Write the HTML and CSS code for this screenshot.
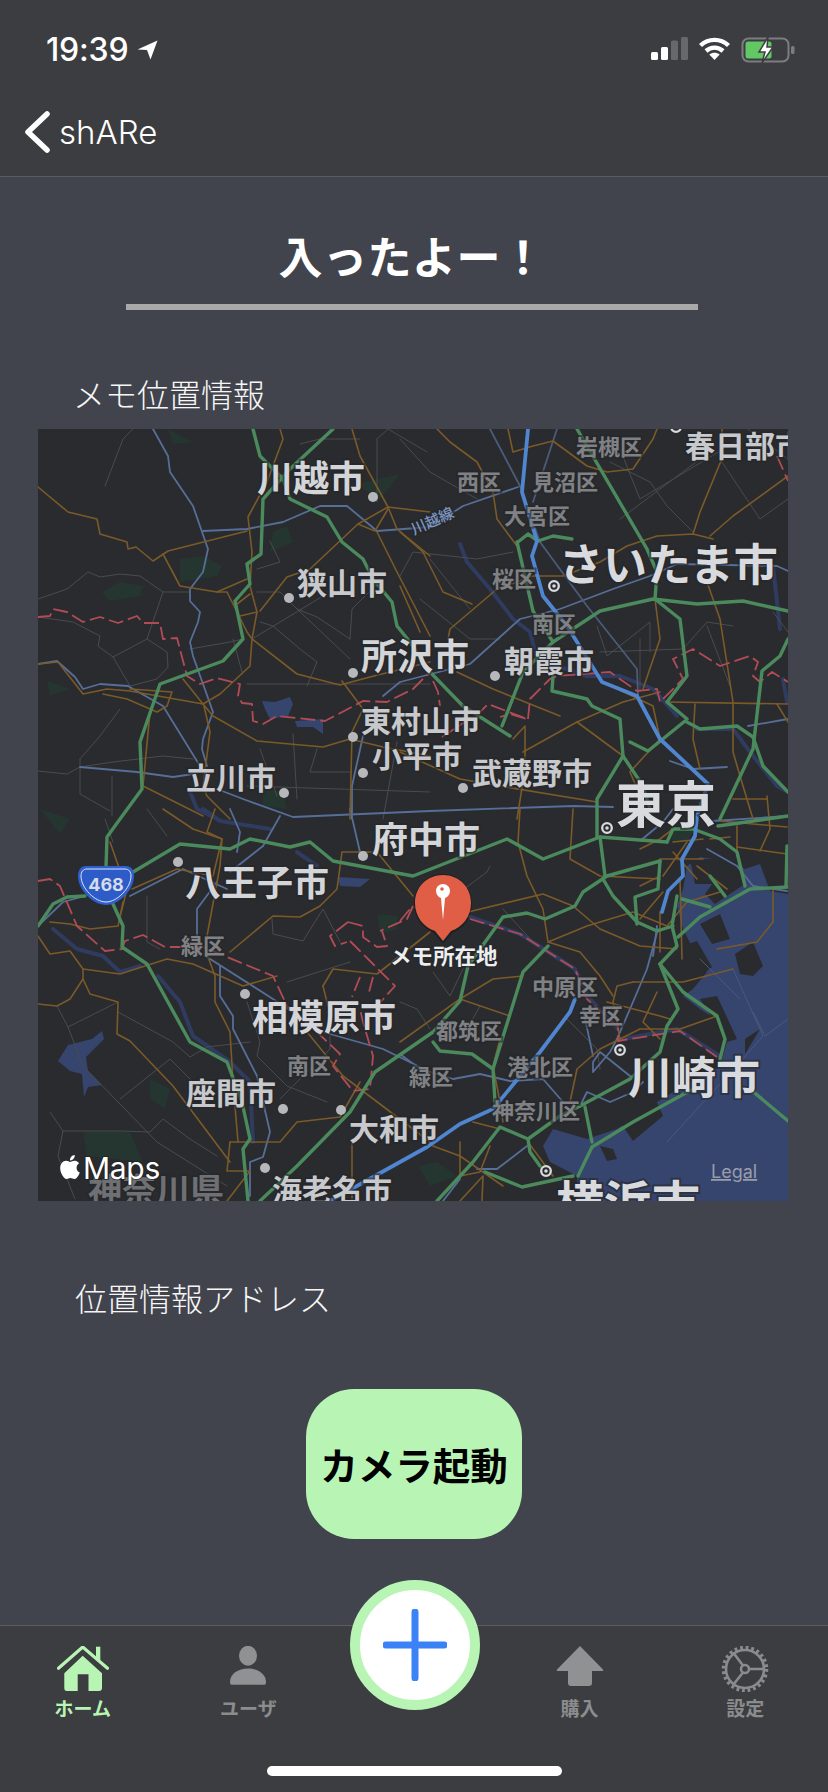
FILE: index.html
```html
<!DOCTYPE html>
<html lang="ja">
<head>
<meta charset="utf-8">
<title>shARe</title>
<link rel="stylesheet" href="styles.css">
</head>
<body>
<div class="app">
  <header class="header">
    <div class="status">
      <div class="status-left">
        <span class="time">19:39</span>
        <svg class="loc" viewBox="0 0 21 20"><path d="M0.5 9.5 20.5 0.5 13.5 19.5 10 10Z"/></svg>
      </div>
      <div class="status-right">
        <svg class="signal" viewBox="0 0 37 24"><rect class="on" x="0" y="15" width="7" height="8" rx="1.5"/><rect class="on" x="10" y="10" width="7" height="13" rx="1.5"/><rect class="off" x="20" y="3.500" width="7" height="19.500" rx="1.500"/><rect class="off" x="30" y="0" width="7" height="23" rx="1.500"/></svg>
        <svg class="wifi" viewBox="0 0 32 24"><path class="arc" d="M2 8.500C10 1 22 1 30 8.500"/><path class="arc" d="M7.500 14C12.500 9.500 19.500 9.500 24.500 14"/><path class="dotw" d="M16 23 10.800 17.500C14 15 18 15 21.200 17.500Z"/></svg>
        <svg class="battery" viewBox="0 0 54 26"><rect class="bat-out" x="1.500" y="1.500" width="46" height="23" rx="6"/><rect class="bat-in" x="4.500" y="4.500" width="26" height="17" rx="2.500"/><rect class="bat-nub" x="50" y="9" width="3.500" height="8" rx="1.500"/><path class="bolt" d="M27 0 18 15H24L21 26 32 10H26Z"/></svg>
      </div>
    </div>
    <div class="nav">
      <svg class="chev" viewBox="0 0 26 42"><path d="M23 3 4 21 23 39"/></svg>
      <span class="back">shARe</span>
    </div>
  </header>

  <main class="main">
    <h1 class="title">入ったよー！</h1>
    <p class="label label-first">メモ位置情報</p>
    <div class="map">
      <svg class="map-svg" viewBox="38 430 750 772" role="img">
        <g class="park">
          <path d="M168 430 193 443 173 445Z"/><path d="M180 560 203 557 222 567 217 577 200 580 180 583Z"/><path d="M102 593 120 583 143 587 140 597 110 602Z"/><path d="M273 533 287 527 293 543 270 553Z"/><path d="M47 682 70 690 50 697Z"/><path d="M263 790 283 793 287 810 263 807Z"/><path d="M83 1133 130 1133 143 1163 87 1157Z"/><path d="M418 1167 437 1163 457 1177 430 1187Z"/><path d="M670 828 695 830 687 843 673 843Z"/><path d="M377 915 397 917 398 930 380 935Z"/><path d="M355 485 400 475 380 500Z"/><path d="M40 810 70 820 60 835Z"/><path d="M150 1080 170 1090 165 1110 150 1100Z"/>
        </g>
        <g class="river">
          <polyline points="53,930 77,950 103,957 120,973 140,967"/>
          <polyline points="158,977 180,1003 193,1037 230,1063 250,1083 253,1143"/>
          <polyline points="297,853 317,867"/>
          <polyline points="190,793 197,810 213,818"/>
          <polyline points="203,810 220,822 270,830"/>
          <polyline points="460,545 467,563 490,590 513,620 530,633 537,660 587,677 620,677 653,690 677,717"/>
          <polyline points="697,730 733,730 750,753 777,787 788,793"/>
          <polyline points="773,567 780,630"/>
          <polyline points="783,680 787,703"/>
          <polyline points="470,918 520,935 575,970 590,1000 618,1030"/>
          <polyline points="623,1040 677,1030 720,1057"/>
        </g>
        <g class="water">
          <path d="M58 1062 68 1046 92 1040 102 1032 104 1040 86 1058 88 1072 102 1086 88 1088 84 1098 82 1075 70 1072Z"/>
          <path d="M338 878 370 880 360 888 340 887Z"/>
          <path d="M262 702 275 703 290 698 293 705 288 717 270 720 265 710Z"/>
          <path d="M295 722 323 720 323 735 313 728 297 728Z"/>
          <path d="M687 867 683 890 677 907 683 930 693 950 707 973 693 990 683 997 700 1010 720 1023 727 1043 720 1067 683 1087 657 1103 617 1130 587 1140 553 1130 543 1147 550 1163 577 1177 578 1202 788 1202 788 895 770 892 760 865 745 870 733 863 700 858Z"/>
        </g>
        <g class="land">
          <path d="M690 860 735 860 745 885 715 905 705 895 712 885 695 885Z"/>
          <path d="M735 955 753 943 763 967 753 977 740 975Z"/>
          <path d="M700 1000 717 997 737 1040 727 1043Z"/>
          <path d="M620 1123 657 1103 663 1117 633 1142Z"/>
          <path d="M600 1147 613 1150 617 1160 607 1162Z"/>
          <path d="M600 1107 620 1097 630 1112 610 1120Z"/>
          <path d="M700 925 720 915 730 940 712 945Z"/>
          <path d="M745 1040 760 1030 745 1055Z"/>
          <path d="M640 1080 650 1075 660 1090 645 1092Z"/>
          <path d="M688 945 697 942 712 968 703 975Z"/>
        </g>
        <g class="seaway">
          <polyline points="733,970 763,1037 740,1063 667,1143"/>
          <polyline points="753,1013 765,1037 788,1020"/>
          <polyline points="700,960 740,1000"/>
        </g>
        <g class="road">
          <polyline points="105,487 123,440 133,430"/>
          <polyline points="38,600 67,590 88,573 100,578 120,575 140,577 163,593 190,593"/>
          <polyline points="38,618 73,623 100,637 98,647 113,658 147,640 163,593"/>
          <polyline points="113,658 130,687"/>
          <polyline points="147,640 167,653 168,668 157,680 130,687"/>
          <polyline points="190,650 230,643 243,640"/>
          <polyline points="233,640 242,673"/>
          <polyline points="247,685 430,685"/>
          <polyline points="252,640 323,597"/>
          <polyline points="260,623 273,627 300,650 317,663 307,687"/>
          <polyline points="297,610 317,618 350,640"/>
          <polyline points="257,593 280,593 297,610 350,660"/>
          <polyline points="270,542 280,563 257,570"/>
          <polyline points="377,440 388,430 427,453"/>
          <polyline points="377,440 377,503"/>
          <polyline points="350,640 352,610 377,585"/>
          <polyline points="38,772 67,775 80,768 113,763 163,757 193,760"/>
          <polyline points="80,760 80,795 110,812"/>
          <polyline points="112,777 112,817"/>
          <polyline points="120,710 100,737 80,760"/>
          <polyline points="260,750 277,797"/>
          <polyline points="293,735 297,800"/>
          <polyline points="317,750 310,773 350,773"/>
          <polyline points="247,787 430,793"/>
          <polyline points="397,743 383,820"/>
          <polyline points="400,440 430,473 477,500"/>
          <polyline points="610,463 650,483 667,507 693,533"/>
          <polyline points="400,577 413,553 477,560 513,553"/>
          <polyline points="597,627 607,657 650,623 650,653"/>
          <polyline points="600,653 683,650"/>
          <polyline points="683,650 707,623 733,627"/>
          <polyline points="707,627 730,687"/>
          <polyline points="773,613 788,633"/>
          <polyline points="68,1028 57,1007"/>
          <polyline points="68,1028 118,1003"/>
          <polyline points="68,1028 83,1067 157,1143 227,1187"/>
          <polyline points="118,1013 173,1043 190,1058 207,1048 250,1043"/>
          <polyline points="50,1113 63,1132 58,1157 75,1200"/>
          <polyline points="63,1132 120,1132 150,1133 163,1120 190,1140 217,1157"/>
          <polyline points="147,897 147,943 160,950"/>
          <polyline points="272,920 273,935 303,942 323,910 340,943"/>
          <polyline points="247,1003 260,1043 257,1057 287,1087 327,1103"/>
          <polyline points="287,983 350,963"/>
          <polyline points="105,820 113,843"/>
          <polyline points="147,810 167,837"/>
          <polyline points="433,973 450,997 463,970"/>
          <polyline points="480,1007 467,1030"/>
          <polyline points="400,1003 417,1010 430,1030"/>
          <polyline points="490,867 487,873 460,893 443,898"/>
          <polyline points="503,910 533,943"/>
          <polyline points="567,1020 597,1050 600,1070"/>
          <polyline points="620,450 640,500 690,470 740,440"/>
          <polyline points="720,460 760,520 788,500"/>
          <polyline points="748,430 788,460"/>
          <polyline points="640,640 640,690"/>
          <polyline points="420,600 470,640 500,640"/>
          <polyline points="430,560 470,610"/>
          <polyline points="360,440 320,440 300,445"/>
          <polyline points="700,460 620,520"/>
          <polyline points="280,1100 330,1050 330,1010"/>
          <polyline points="120,1100 170,1060 210,1100"/>
        </g>
        <g class="rail">
          <polyline points="153,430 168,457 170,473 193,507 208,550 203,573 190,590 190,602 200,613 198,623 190,643 193,657 213,713 203,740 202,750 207,767"/>
          <polyline points="203,532 247,530 283,523 320,507 347,507 377,532 430,528 463,507 518,488"/>
          <polyline points="38,665 57,662 75,678 83,690 100,685 128,687 163,707 200,767"/>
          <polyline points="80,768 137,773 173,778 193,775"/>
          <polyline points="217,790 243,800 293,818 430,812 573,807 613,808"/>
          <polyline points="383,697 400,683 470,665 520,620 560,610 613,590 650,577 677,565 777,567 788,572"/>
          <polyline points="363,737 352,787 352,820 350,810 360,853"/>
          <polyline class="dim" points="490,430 520,487 540,543 587,607 637,670 638,697"/>
          <polyline class="dim" points="557,430 533,503"/>
          <polyline points="38,927 63,903 85,897"/>
          <polyline points="130,897 183,870 227,890"/>
          <polyline points="197,937 197,910 217,883"/>
          <polyline points="207,958 273,1000 323,1033 383,1050 430,1073"/>
          <polyline points="220,967 220,997 233,1017 233,1030 257,1077 270,1133 263,1158 250,1163 250,1197"/>
          <polyline points="230,810 240,833 237,853"/>
          <polyline points="280,817 263,847 230,873"/>
          <polyline points="400,1055 420,1070 453,1080 480,1075 510,1082 543,1080 563,1103"/>
          <polyline points="658,930 647,970 630,1010 617,1040 610,1053 593,1073 593,1063 600,1053 630,1077"/>
          <polyline points="583,1010 593,1057"/>
          <polyline points="580,1107 587,1093 610,1103 633,1093 643,1083"/>
          <polyline points="477,1170 497,1170 527,1147"/>
          <polyline points="443,1202 460,1180"/>
          <polyline points="640,842 663,823 673,810"/>
          <polyline points="707,850 737,867 753,887 787,892"/>
          <polyline points="713,822 787,817"/>
          <polyline points="657,927 653,957"/>
          <polyline points="748,727 788,720"/>
          <polyline points="670,762 693,770 727,768"/>
        </g>
        <g class="major">
          <polyline points="38,488 68,513 97,520 100,535 127,543 128,550 136,548 153,562 168,552 247,532"/>
          <polyline points="163,555 180,587 217,593 227,593 247,633 252,640 297,675 340,686 370,678 430,663"/>
          <polyline points="280,430 283,440 267,483 248,518 252,553 250,587 257,613 252,640 250,667 220,695 203,705 183,680"/>
          <polyline points="217,593 247,580"/>
          <polyline points="237,605 250,595"/>
          <polyline points="240,617 257,613"/>
          <polyline points="260,612 287,578 310,570 358,525 388,508 430,513"/>
          <polyline points="352,430 360,457 388,508 397,530 430,557"/>
          <polyline points="358,525 375,532 388,510"/>
          <polyline points="377,533 397,573 430,637"/>
          <polyline points="38,665 58,663 83,695 107,690 130,692 203,705 213,717 257,742 323,748 350,740 383,748 430,757"/>
          <polyline points="103,695 127,700 157,713 167,707 172,693 130,690"/>
          <polyline points="150,713 143,787 203,817"/>
          <polyline points="204,707 210,733 203,787 207,797 230,820"/>
          <polyline points="342,682 363,710 352,733 350,820"/>
          <polyline points="437,430 450,443 477,463 493,493 497,520 517,547"/>
          <polyline points="508,430 513,453 533,447 553,442 587,467 607,473 633,470 653,440 657,430"/>
          <polyline points="400,533 423,553 443,593 472,605"/>
          <polyline points="400,587 420,633"/>
          <polyline points="448,640 450,630 497,590 533,577 563,577 600,563 627,547 657,537 693,535 713,540"/>
          <polyline points="693,535 700,513 723,457 722,430"/>
          <polyline points="710,537 733,517 788,477"/>
          <polyline points="655,600 660,640 643,690"/>
          <polyline points="707,583 720,620 733,703 733,753 743,787 753,820"/>
          <polyline points="667,703 788,705"/>
          <polyline points="695,705 693,740 700,770"/>
          <polyline points="777,705 788,723"/>
          <polyline points="457,673 493,690 560,717"/>
          <polyline points="523,753 577,723 623,703 660,693"/>
          <polyline points="577,723 623,757"/>
          <polyline points="513,740 525,727 525,770 517,820"/>
          <polyline points="400,753 460,780 500,787 597,803"/>
          <polyline points="603,683 653,707 660,740 630,773 650,820"/>
          <polyline points="38,937 50,955 70,952 83,970 120,975 167,960 193,965 243,987 277,977"/>
          <polyline points="83,970 83,980 70,1000 57,1007 38,1005"/>
          <polyline points="83,980 90,995 118,1003 117,1035 130,1042 173,1087 230,1163"/>
          <polyline points="110,843 117,863 127,890 120,918"/>
          <polyline points="50,923 70,925 90,930 118,927 123,903"/>
          <polyline points="132,890 177,870 213,877 222,840 193,830 163,810"/>
          <polyline points="215,810 207,833 222,840 220,867 207,937 207,955 215,977 215,1003 230,1033 233,1083 238,1143"/>
          <polyline points="230,953 273,917 300,918 320,907 337,890 342,853 377,853 413,897"/>
          <polyline points="230,1143 280,1143 297,1123 340,1118 360,1083"/>
          <polyline points="230,1143 227,1172 250,1172 227,1202"/>
          <polyline points="307,1033 343,1077 430,1143"/>
          <polyline points="323,987 333,970 377,975 430,933"/>
          <polyline points="323,987 328,1007"/>
          <polyline points="352,1143 352,1202"/>
          <polyline points="520,810 518,843 527,877 543,910 548,943 580,953 600,977 613,997"/>
          <polyline points="468,913 543,895 573,907 600,930 640,947 677,950"/>
          <polyline points="548,943 587,927 633,913 667,927 687,903 720,893"/>
          <polyline points="573,810 570,860 600,877 660,880"/>
          <polyline points="460,1000 493,980 523,977"/>
          <polyline points="400,1043 460,1000 510,1017"/>
          <polyline points="500,1040 493,1067 500,1103 503,1123"/>
          <polyline points="570,1103 577,1070 600,1050 640,1030 680,1030 717,1017"/>
          <polyline points="633,983 617,987 613,1003 620,1040"/>
          <polyline points="607,1003 660,1017 670,1020"/>
          <polyline points="633,983 683,983 733,970"/>
          <polyline points="657,993 643,1023 660,1040"/>
          <polyline points="673,843 703,840"/>
          <polyline points="663,877 687,843"/>
          <polyline points="673,853 697,880"/>
          <polyline points="660,860 703,860"/>
          <polyline points="710,840 730,838"/>
          <polyline points="737,827 737,857"/>
          <polyline points="720,822 787,828"/>
          <polyline points="737,848 787,855"/>
          <polyline points="767,797 770,830 760,852"/>
          <polyline points="733,800 767,800"/>
          <polyline points="640,850 660,840 673,830"/>
          <polyline points="640,887 660,877"/>
          <polyline points="640,920 663,893"/>
          <polyline points="660,913 660,953"/>
          <polyline points="697,867 727,890"/>
          <polyline points="773,890 773,923 757,943 717,950"/>
          <polyline points="680,880 682,960"/>
          <polyline points="460,1143 460,1177 480,1173 490,1147"/>
          <polyline points="473,1123 500,1130"/>
          <polyline points="433,1147 460,1157 503,1187"/>
          <polyline points="528,1143 553,1177"/>
          <polyline points="460,1202 483,1177 482,1202"/>
        </g>
        <g class="border">
          <polyline points="38,618 50,617 53,610 67,613 83,623 100,618 118,624 137,617 143,624 160,624 163,640 177,639 187,677 200,685 217,679 240,685 238,697 242,704 252,705 253,722 263,725 277,717 325,722 363,702 387,703 413,690 430,673"/>
          <polyline points="433,682 438,693 440,707"/>
          <polyline points="442,738 480,713 488,705 527,720 510,715 500,718"/>
          <polyline points="528,720 530,700 550,680 557,677 610,673 637,692 657,690 660,703 683,680 673,660 693,650 720,667 750,657 758,663 753,677 760,683 772,673 788,683"/>
          <polyline points="777,457 788,482"/>
          <polyline points="38,882 50,880 60,887 77,927 105,952 122,950 125,942 143,936 165,948 203,948 273,977 287,1007 317,1033 340,1055 333,1067 353,1092 370,1090 373,1057 363,1023 360,1010"/>
          <polyline points="413,907 407,920 380,932"/>
          <polyline points="348,923 330,937 335,947 347,943"/>
          <polyline points="348,923 363,927 363,938 377,948 387,947 382,932"/>
          <polyline points="350,942 395,987 377,1007"/>
          <polyline points="373,978 368,997"/>
          <polyline points="360,978 352,998"/>
          <polyline points="400,922 410,910"/>
          <polyline points="470,920 520,935 575,970 587,1000 618,1028 618,1042 680,1032 717,1058"/>
        </g>
        <g class="motorway">
          <polyline points="253,430 260,457 283,480 290,500 327,518 342,543 363,560 373,580 392,603 397,627 410,643 430,673 463,707 510,737"/>
          <polyline points="333,430 290,470 263,500 261,555 247,565 250,585 235,602 243,640 223,662 160,685 140,743 142,790 120,820 107,838 106,868"/>
          <polyline points="85,897 67,898 53,905 38,927"/>
          <polyline points="113,905 123,927 122,948 147,965 190,1043 227,1063 242,1103 250,1140 243,1150 248,1202"/>
          <polyline points="133,873 180,845 230,850 250,840 290,848 310,843 333,862 413,877 507,840 543,860 600,838 667,843"/>
          <polyline points="260,1202 297,1167 350,1113 375,1073 433,1033 460,1002 468,967 503,918 527,914 545,920 575,907 583,893 607,877 660,862"/>
          <polyline points="433,1043 440,1052 472,1055 493,1070 495,1103"/>
          <polyline points="493,1070 523,973 548,947"/>
          <polyline points="603,880 613,897 637,923 657,932 673,927"/>
          <polyline points="600,838 605,877"/>
          <polyline points="660,965 678,1010 667,1027 660,1053 630,1080 580,1107"/>
          <polyline points="677,897 672,927 677,947 660,965"/>
          <polyline points="660,965 683,993 717,1017 725,1040 720,1060"/>
          <polyline points="678,938 700,918 750,890 788,888"/>
          <polyline points="592,1148 633,1123 693,1090"/>
          <polyline points="750,1090 788,1122"/>
          <polyline points="592,1148 578,1177"/>
          <polyline points="485,1173 522,1188 573,1177"/>
          <polyline points="437,1202 473,1163 500,1128 528,1140 530,1153 540,1167"/>
          <polyline points="528,1140 560,1117 580,1107"/>
          <polyline points="585,1108 592,1143"/>
          <polyline points="667,843 673,830 693,830 720,840 737,853 745,887"/>
          <polyline points="718,827 788,817"/>
          <polyline points="710,877 725,897"/>
          <polyline points="682,900 710,908"/>
          <polyline points="660,862 658,890 635,898 637,925"/>
          <polyline points="787,847 786,888"/>
          <polyline points="577,430 647,550 657,573 655,600 680,620 687,677 667,703 687,720"/>
          <polyline points="517,543 533,612 553,643 523,673 502,727"/>
          <polyline points="518,543 528,535 538,542 553,537 572,540"/>
          <polyline points="553,643 600,612 653,600 697,605 743,602 788,612"/>
          <polyline points="553,677 552,692 587,700 592,707 620,720 623,757 597,800 597,838"/>
          <polyline points="623,757 643,787 650,810"/>
          <polyline points="630,743 648,752 685,722 700,730 737,727 753,738 763,767 788,793"/>
          <polyline points="788,640 780,657 762,672 753,750 720,820"/>
        </g>
        <g class="expressway">
          <polyline points="528,430 522,493 537,542 532,557 543,597 567,627 602,683 637,697 660,740 708,785 697,817 695,837 682,860 683,877 668,892 662,913"/>
          <polyline points="575,1000 570,1013 540,1053 493,1110 460,1125 427,1148 400,1163 330,1202"/>
        </g>
        <g class="dot">
          <circle cx="373" cy="498" r="5"/><circle cx="289" cy="599" r="5"/><circle cx="353" cy="674" r="5"/><circle cx="353" cy="738" r="5"/><circle cx="363" cy="774" r="5"/><circle cx="284" cy="794" r="5"/><circle cx="495" cy="677" r="5"/><circle cx="463" cy="789" r="5"/><circle cx="178" cy="863" r="5"/><circle cx="363" cy="857" r="5"/><circle cx="245" cy="995" r="5"/><circle cx="283" cy="1110" r="5"/><circle cx="341" cy="1111" r="5"/><circle cx="265" cy="1169" r="5"/>
        </g>
        <g class="ring">
          <circle cx="554" cy="587" r="4.800"/><circle cx="607" cy="829" r="4.800"/><circle cx="620" cy="1051" r="4.800"/><circle cx="546" cy="1172" r="4.800"/><circle cx="676" cy="428" r="4.800"/>
        </g>
        <g class="ring-c">
          <circle cx="554" cy="587" r="1.800"/><circle cx="607" cy="829" r="1.800"/><circle cx="620" cy="1051" r="1.800"/><circle cx="546" cy="1172" r="1.800"/>
        </g>
        <g class="lb lb35">
          <text x="257" y="493">川越市</text><text x="361" y="671">所沢市</text><text x="372" y="854">府中市</text><text x="185" y="897">八王子市</text><text x="252" y="1032">相模原市</text>
        </g>
        <g class="lb lb29">
          <text x="297" y="595">狭山市</text><text x="504" y="673">朝霞市</text><text x="361" y="733">東村山市</text><text x="372" y="768">小平市</text><text x="472" y="785">武蔵野市</text><text x="186" y="790">立川市</text><text x="186" y="1105">座間市</text><text x="349" y="1141">大和市</text><text x="272" y="1202">海老名市</text><text x="685" y="458">春日部市</text>
        </g>
        <g class="lb lb42">
          <text x="559" y="582">さいたま市</text><text x="628" y="1095">川崎市</text>
        </g>
        <text class="lb lb46" x="616" y="824">東京</text>
        <text class="lb lb48" x="556" y="1222">横浜市</text>
        <g class="lb lb21">
          <text x="576" y="456">岩槻区</text><text x="457" y="491">西区</text><text x="532" y="491">見沼区</text><text x="504" y="525">大宮区</text><text x="492" y="588">桜区</text><text x="532" y="633">南区</text><text x="181" y="955">緑区</text><text x="287" y="1075">南区</text><text x="532" y="996">中原区</text><text x="579" y="1025">幸区</text><text x="436" y="1040">都筑区</text><text x="409" y="1086">緑区</text><text x="507" y="1076">港北区</text><text x="492" y="1120">神奈川区</text>
        </g>
        <text class="lb lb-ken" x="88" y="1204">神奈川県</text>
        <text class="lb lb-line" transform="translate(414 536) rotate(-24)">川越線</text>
        <g class="shield">
          <path class="sh-out" d="M86 867H126C131 867 134 871 134 877 134 891 119 906 106 906 93 906 78 891 78 877 78 871 81 867 86 867Z"/>
          <path class="sh-in" d="M87 870H125C129 870 131 873 131 877 131 889 117 903 106 903 95 903 81 889 81 877 81 873 83 870 87 870Z"/>
          <text class="sh-txt" x="106" y="892">468</text>
        </g>
        <g class="pin">
          <path class="pin-shadow" d="M443 945 434 934C421 929 414 917 414 905 414 888 427 875 443 875 459 875 472 888 472 905 472 917 465 929 452 934Z"/>
          <path class="pin-body" d="M443 942 435 932C423 928 415 917 415 904 415 888 427 876 443 876 459 876 471 888 471 904 471 917 463 928 451 932Z"/>
          <path class="pin-mark" d="M441 899C438 898 436 895 436 892 436 888 439 885 443 885 447 885 450 888 450 892 450 895 448 898 445 899L443 921Z"/>
          <circle class="pin-hole" cx="442" cy="890" r="1.800"/>
        </g>
        <text class="lb-pin" x="390" y="965">メモ所在地</text>
        <svg class="apple" x="58" y="1155" width="24" height="26" viewBox="0 0 24 24"><path d="M12.152 6.896c-.948 0-2.415-1.078-3.96-1.04-2.04.027-3.91 1.183-4.961 3.014-2.117 3.675-.546 9.103 1.519 12.09 1.013 1.454 2.208 3.09 3.792 3.039 1.52-.065 2.09-.987 3.935-.987 1.831 0 2.35.987 3.96.948 1.637-.026 2.676-1.48 3.676-2.948 1.156-1.688 1.636-3.325 1.662-3.415-.039-.013-3.182-1.221-3.22-4.857-.026-3.04 2.48-4.494 2.597-4.559-1.429-2.09-3.623-2.324-4.39-2.376-2-.156-3.675 1.09-4.61 1.09zM15.53 3.83c.843-1.012 1.4-2.427 1.245-3.83-1.207.052-2.662.805-3.532 1.818-.78.896-1.454 2.338-1.273 3.714 1.338.104 2.715-.688 3.559-1.701"/></svg>
        <text class="maps" x="83" y="1180">Maps</text>
        <text class="legal" x="711" y="1179">Legal</text>
      </svg>
    </div>
    <p class="label label-second">位置情報アドレス</p>
    <button class="camera" type="button">カメラ起動</button>
  </main>

  <nav class="tabbar">
    <div class="tab tab-active">
      <svg class="ticon" width="52" height="46" viewBox="0 0 52 46"><path class="home-roof" d="M1.500 22.300 25.700 1 50.500 22.300"/><rect class="home-fill" x="39" y="0.700" width="4.300" height="13.500"/><path class="home-fill home-body" d="M7.300 27.300 25.700 9.800 45 27.300V42C45 44 44 45 42 45H31.500V28.300H20.700V45H10C8 45 7.300 44 7.300 42Z"/></svg>
      <span class="tab-label">ホーム</span>
    </div>
    <div class="tab">
      <svg class="ticon" width="36" height="46" viewBox="0 0 36 46"><ellipse class="gray" cx="18" cy="9.800" rx="9" ry="10"/><path class="gray" d="M1.500 38.800Q0 38.800 0 36C0 28 8 22.500 18 22.500 28 22.500 36 28 36 36 36 38.800 34.500 38.800 34.500 38.800Z"/></svg>
      <span class="tab-label">ユーザ</span>
    </div>
    <div class="tab tab-spacer"></div>
    <div class="tab">
      <svg class="ticon" width="48" height="46" viewBox="0 0 48 46"><path class="gray" d="M24 0 47 23.500C47.500 24.500 47 25 46 25H36V37C36 39 35 40 33 40H15C13 40 12 39 12 37V25H2C1 25 .5 24.500 1 23.500Z"/></svg>
      <span class="tab-label">購入</span>
    </div>
    <div class="tab">
      <svg class="ticon" width="50" height="46" viewBox="0 0 48 46"><circle class="gear-teeth" cx="24" cy="23" r="21.500"/><circle class="gear-line" cx="24" cy="23" r="19"/><circle class="gear-line" cx="24" cy="23" r="4"/><path class="gear-line" d="M28 23H43M22 19.500 12.500 7M22 26.500 12 39"/></svg>
      <span class="tab-label">設定</span>
    </div>
    <button class="fab" type="button" aria-label="追加">
      <svg width="64" height="72" viewBox="0 0 64 72"><path class="plus" d="M32 3V69M3 36H61"/></svg>
    </button>
    <div class="home-ind"></div>
  </nav>
</div>
</body>
</html>
```
FILE: styles.css
```css
* { box-sizing: border-box; }
html, body { margin: 0; padding: 0; background: #41444d; }
body { font-family: "Noto Sans CJK JP", "Noto Sans", sans-serif; color: #fff; }
.app { width: 828px; height: 1792px; display: flex; flex-direction: column; overflow: hidden; }

.header { height: 177px; background: #3c3d40; border-bottom: 1px solid #5b5c60; flex: none; }
.status { height: 88px; display: flex; justify-content: space-between; padding: 0 33px 0 46px; }
.status-left { display: flex; align-items: flex-start; padding-top: 31px; gap: 9px; }
.time { font-family: Inter, sans-serif; font-weight: 500; font-size: 32px; line-height: 38px; letter-spacing: -0.2px; }
.loc { width: 21px; height: 20px; margin-top: 9px; fill: #fff; }
.status-right { display: flex; align-items: flex-start; padding-top: 37px; gap: 10px; }
.signal { width: 37px; height: 24px; }
.on { fill: #fff; }
.off { fill: #676869; }
.wifi { width: 33px; height: 24px; }
.arc { fill: none; stroke: #fff; stroke-width: 4.400; }
.dotw { fill: #fff; }
.battery { width: 54px; height: 26px; }
.bat-out { fill: none; stroke: #7c7d80; stroke-width: 2; }
.bat-in { fill: #62c866; }
.bat-nub { fill: #7c7d80; }
.bolt { fill: #fff; stroke: #3c3d40; stroke-width: 1.5; }

.nav { height: 88px; display: flex; align-items: flex-start; padding: 23px 0 0 24px; gap: 9px; }
.chev { width: 26px; height: 42px; fill: none; stroke: #fff; stroke-width: 5.5; stroke-linecap: round; stroke-linejoin: round; }
.back { font-family: Inter, sans-serif; font-weight: 300; font-size: 33px; line-height: 38px; margin-top: 2px; }

.main { flex: 1; display: flex; flex-direction: column; align-items: flex-start; min-height: 0; }
.title { margin: 53px 0 0 126px; width: 572px; height: 80px; border-bottom: 6px solid #a9a9a9; text-align: center; font-size: 44px; line-height: 50px; font-weight: 700; letter-spacing: .5px; }
.label { margin: 0; font-size: 32px; line-height: 34px; font-weight: 300; color: #f6f6f6; }
.label-first { margin: 66px 0 0 73px; }
.label-second { margin: 79px 0 0 75px; }
.map { margin: 19px 0 0 38px; width: 750px; height: 772px; background: #2a2b2e; overflow: hidden; flex: none; }
.map-svg { display: block; width: 750px; height: 772px; }
.map-svg polyline { fill: none; stroke-linejoin: round; stroke-linecap: round; }

.park { fill: #253530; }
.river polyline { stroke: #2f3c60; stroke-width: 4; }
.water { fill: #36456e; }
.land { fill: #2a2b2e; }
.seaway polyline { stroke: #4a587f; stroke-width: 1; }
.road polyline { stroke: #4a4b4e; stroke-width: 1; }
.rail polyline { stroke: #566e98; stroke-width: 1.800; }
.rail polyline.dim { stroke: #4b5b79; }
.major polyline { stroke: #7b5a28; stroke-width: 1.600; }
.border polyline { stroke: #b14c57; stroke-width: 1.8; stroke-dasharray: 15 5; stroke-linecap: butt; }
.motorway polyline { stroke: #4b8a5c; stroke-width: 3.400; }
.expressway polyline { stroke: #5085d0; stroke-width: 3.800; }
.dot { fill: #b7b8bc; }
.ring { fill: #2a2b2e; stroke: #d9dbde; stroke-width: 2.300; }
.ring-c { fill: #d9dbde; }

.lb { font-family: "Noto Sans CJK JP", sans-serif; font-weight: 700; fill: #d3d5d8; stroke: rgba(38,39,42,.6); stroke-width: 4px; paint-order: stroke; }
.lb35 { font-size: 36px; }
.lb29 { font-size: 30px; fill: #c7c9cc; }
.lb42 { font-size: 44px; fill: #d8dadd; }
.lb46 { font-size: 50px; fill: #d8dadd; }
.lb48 { font-size: 48px; fill: #d8dadd; }
.lb21 { font-size: 22px; fill: #7f8184; font-weight: 700; }
.lb-ken { font-size: 34px; fill: #6e7073; }
.lb-line { font-size: 15px; font-weight: 500; fill: #7c96c0; }
.lb-pin { font-family: "Noto Sans CJK JP", sans-serif; font-weight: 700; font-size: 21.500px; fill: #eceef0; stroke: rgba(38,39,42,.7); stroke-width: 3px; paint-order: stroke; }

.sh-out { fill: #2d5fd0; }
.sh-in { fill: #2d5cc8; stroke: #dfe5f2; stroke-width: 1; }
.sh-txt { font-family: Inter, "Liberation Sans", sans-serif; font-weight: 700; font-size: 18px; fill: #d6dbe6; text-anchor: middle; }

.pin-shadow { fill: rgba(0,0,0,.25); }
.pin-body { fill: #e05e46; }
.pin-mark { fill: #fff; }
.pin-hole { fill: #e05e46; }

.apple { fill: #fff; }
.maps { font-family: Inter, sans-serif; font-size: 30px; font-weight: 400; fill: #fff; stroke: rgba(30,30,32,.6); stroke-width: 2px; paint-order: stroke; letter-spacing: -0.3px; }
.legal { font-family: Inter, sans-serif; font-size: 18px; font-weight: 400; fill: #989cab; text-decoration: underline; }

.camera { margin: 75px 0 0 306px; width: 216px; height: 150px; border: 0; border-radius: 48px; background: #b8f5b5; color: #000; font-family: "Noto Sans CJK JP", sans-serif; font-weight: 700; font-size: 37.500px; line-height: 1; padding: 0; flex: none; }

.tabbar { position: relative; height: 167px; flex: none; background: #3c3d40; border-top: 1px solid #5b5c60; display: grid; grid-template-columns: repeat(5, 1fr); }
.tab { display: flex; flex-direction: column; align-items: center; padding-top: 20px; }
.ticon { display: block; flex: none; }
.tab-label { margin-top: 3px; font-size: 19px; line-height: 26px; font-weight: 700; color: #8b8c8e; }
.tab-active .tab-label { color: #b8f5b5; }
.home-roof { fill: none; stroke: #b8f5b5; stroke-width: 3.200; stroke-linecap: round; stroke-linejoin: round; }
.home-fill { fill: #b8f5b5; }
.gray { fill: #909193; }
.gear-teeth { fill: none; stroke: #8a8b8d; stroke-width: 3.500; stroke-dasharray: 2.800 2.830; }
.gear-line { fill: none; stroke: #8a8b8d; stroke-width: 2.600; }
.fab { position: absolute; left: 350px; top: -46px; width: 130px; height: 130px; border-radius: 50%; background: #fff; border: 10px solid #b8f5b5; padding: 0; display: flex; align-items: center; justify-content: center; }
.plus { fill: none; stroke: #3b82f6; stroke-width: 7; stroke-linecap: round; }
.home-ind { position: absolute; left: 267px; top: 140px; width: 295px; height: 10px; border-radius: 5px; background: #fff; }
```
